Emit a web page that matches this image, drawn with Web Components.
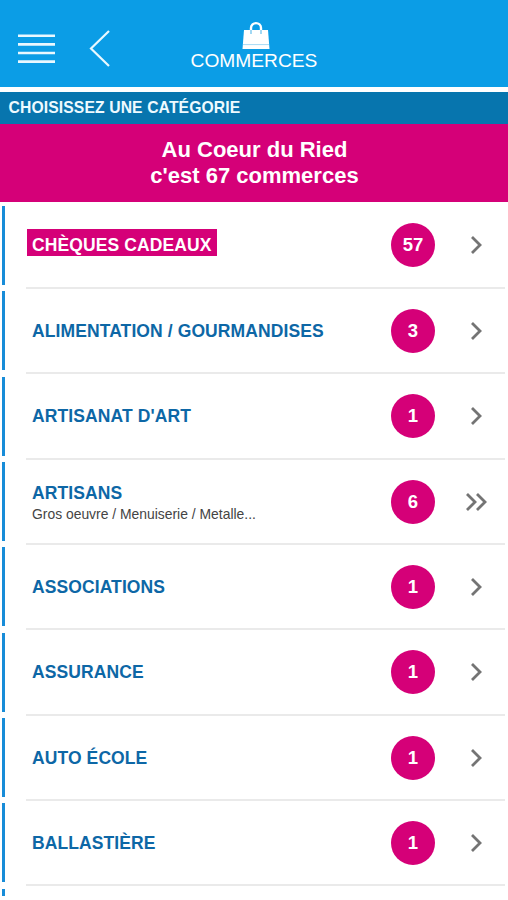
<!DOCTYPE html>
<html lang="fr">
<head>
<meta charset="utf-8">
<meta name="viewport" content="width=device-width, initial-scale=1">
<title>Commerces</title>
<style>
  body {
    margin: 0;
    height: 900px;
    overflow: hidden;
    background: #fff;
    font-family: "Liberation Sans", Arial, sans-serif;
  }
</style>
</head>
<body>
<commerce-app>
  <app-header slot="header">COMMERCES</app-header>
  <section-title slot="header">CHOISISSEZ UNE CATÉGORIE</section-title>
  <promo-banner slot="header">Au Coeur du Ried<br>c'est 67 commerces</promo-banner>

  <category-row count="57" highlight>CHÈQUES CADEAUX</category-row>
  <category-row count="3">ALIMENTATION / GOURMANDISES</category-row>
  <category-row count="1">ARTISANAT D'ART</category-row>
  <category-row count="6" nested>ARTISANS<span slot="detail">Gros oeuvre / Menuiserie / Metalle...</span></category-row>
  <category-row count="1">ASSOCIATIONS</category-row>
  <category-row count="1">ASSURANCE</category-row>
  <category-row count="1">AUTO ÉCOLE</category-row>
  <category-row count="1">BALLASTIÈRE</category-row>
  <category-row></category-row>
</commerce-app>

<script>
class CommerceApp extends HTMLElement {
  constructor() {
    super();
    const shadow = this.attachShadow({ mode: "open" });
    shadow.innerHTML = `
      <style>
        :host {
          display: flex;
          flex-direction: column;
          height: 896px;
          overflow: hidden;
        }

        header {
          flex: none;
          padding-bottom: 0.7px;
        }

        main {
          flex: 1;
          min-height: 0;
          overflow: hidden;
        }
      </style>
      <header><slot name="header"></slot></header>
      <main><slot></slot></main>
    `;
  }
}

class AppHeader extends HTMLElement {
  constructor() {
    super();
    const shadow = this.attachShadow({ mode: "open" });
    shadow.innerHTML = `
      <style>
        :host {
          display: grid;
          grid-template-columns: 1fr auto 1fr;
          height: 87px;
          background: #0b9de6;
          border-bottom: 5px solid #fff;
          color: #fff;
        }

        nav {
          display: flex;
          align-items: flex-start;
          gap: 34px;
          padding: 30px 0 0 18px;
        }

        svg {
          display: block;
        }

        .title {
          display: flex;
          flex-direction: column;
          align-items: center;
          padding-top: 21px;
          font-size: 19.2px;
          line-height: 24px;
        }

        .bag {
          margin-left: 5px;
        }
      </style>
      <nav>
        <svg width="37" height="36" viewBox="0 0 37 36" stroke="#e9f8ff" stroke-width="2.6" aria-hidden="true">
          <path d="M0 5.8h37M0 14.4h37M0 23h37M0 31.6h37" />
        </svg>
        <svg width="21" height="38" viewBox="0 0 21 38" fill="none" stroke="#e9f8ff" stroke-width="2.2" aria-hidden="true">
          <path d="M20 1L2 18.5L20 36" />
        </svg>
      </nav>
      <div class="title">
        <svg class="bag" width="28" height="28" viewBox="0 0 28 28" aria-hidden="true">
          <path d="M2 9H26L27.5 28H0.5Z" fill="#fff" />
          <path d="M9 12V7C9 0.5 19 0.5 19 7V12" fill="none" stroke="#fff" stroke-width="2.4" />
          <path d="M9 9v4M19 9v4" stroke="#7ac8ef" stroke-width="1.4" />
          <path d="M1 23.6H27" stroke="#a5daf5" stroke-width="1" />
        </svg>
        <slot></slot>
      </div>
    `;
  }
}

class SectionTitle extends HTMLElement {
  constructor() {
    super();
    const shadow = this.attachShadow({ mode: "open" });
    shadow.innerHTML = `
      <style>
        :host {
          display: block;
          height: 32px;
          padding-left: 8.5px;
          background: #0775ae;
          color: #eefaff;
          font-size: 15.7px;
          font-weight: bold;
          letter-spacing: 0.12px;
          line-height: 31px;
        }
      </style>
      <slot></slot>
    `;
  }
}

class PromoBanner extends HTMLElement {
  constructor() {
    super();
    const shadow = this.attachShadow({ mode: "open" });
    shadow.innerHTML = `
      <style>
        :host {
          display: block;
          box-sizing: border-box;
          height: 78.3px;
          padding: 13px 0 0 1px;
          background: #d50078;
          color: #fff;
          font-size: 22px;
          font-weight: bold;
          line-height: 26px;
          text-align: center;
        }
      </style>
      <slot></slot>
    `;
  }
}

class CategoryRow extends HTMLElement {
  constructor() {
    super();
    const shadow = this.attachShadow({ mode: "open" });
    const count = this.getAttribute("count");

    // a double chevron marks categories that have sub-categories
    const arrow = this.hasAttribute("nested")
      ? "M2 2L10 10L2 18M12 2L20 10L12 18"
      : "M7 2L15 10L7 18";

    shadow.innerHTML = `
      <style>
        :host {
          display: flex;
          box-sizing: border-box;
          height: 85.35px;
          padding: 0 3px 0 2px;
        }

        .marker {
          width: 3.4px;
          height: 79px;
          margin-top: 3px;
          background: #178cd8;
        }

        .content {
          flex: 1;
          display: flex;
          align-items: center;
          box-sizing: border-box;
          height: 86px;
          padding-top: 1px;
          margin-left: 20.6px;
          border-bottom: 2px solid #eaeaea;
        }

        .label {
          flex: 1;
          padding-left: 6px;
          color: #0d67a6;
          font-size: 17.5px;
          font-weight: bold;
          letter-spacing: 0.1px;
          line-height: 20px;
          white-space: nowrap;
        }

        :host([nested]) .label {
          padding-top: 4px;
          line-height: 21px;
        }

        :host([highlight]) .name {
          display: inline-block;
          margin: 0 0 6px -5px;
          padding: 6px 5.5px 1px 5px;
          background: #d50078;
          color: #fff;
        }

        .detail {
          display: block;
          color: #444;
          font-size: 13.9px;
          font-weight: normal;
          letter-spacing: 0;
        }

        .count {
          display: flex;
          align-items: center;
          justify-content: center;
          width: 44px;
          height: 44px;
          margin-right: 30px;
          border-radius: 50%;
          background: #d50078;
          color: #fff;
          font-size: 18.5px;
          font-weight: bold;
        }

        svg {
          margin-right: 18px;
        }
      </style>
      <div class="marker"></div>
      ${count ? `
      <div class="content">
        <div class="label">
          <span class="name"><slot></slot></span>
          <span class="detail"><slot name="detail"></slot></span>
        </div>
        <div class="count">${count}</div>
        <svg width="22" height="20" viewBox="0 0 22 20" fill="none" stroke="#747474" stroke-width="2.8" aria-hidden="true">
          <path d="${arrow}" />
        </svg>
      </div>` : ""}
    `;
  }
}

customElements.define("commerce-app", CommerceApp);
customElements.define("app-header", AppHeader);
customElements.define("section-title", SectionTitle);
customElements.define("promo-banner", PromoBanner);
customElements.define("category-row", CategoryRow);
</script>
</body>
</html>
